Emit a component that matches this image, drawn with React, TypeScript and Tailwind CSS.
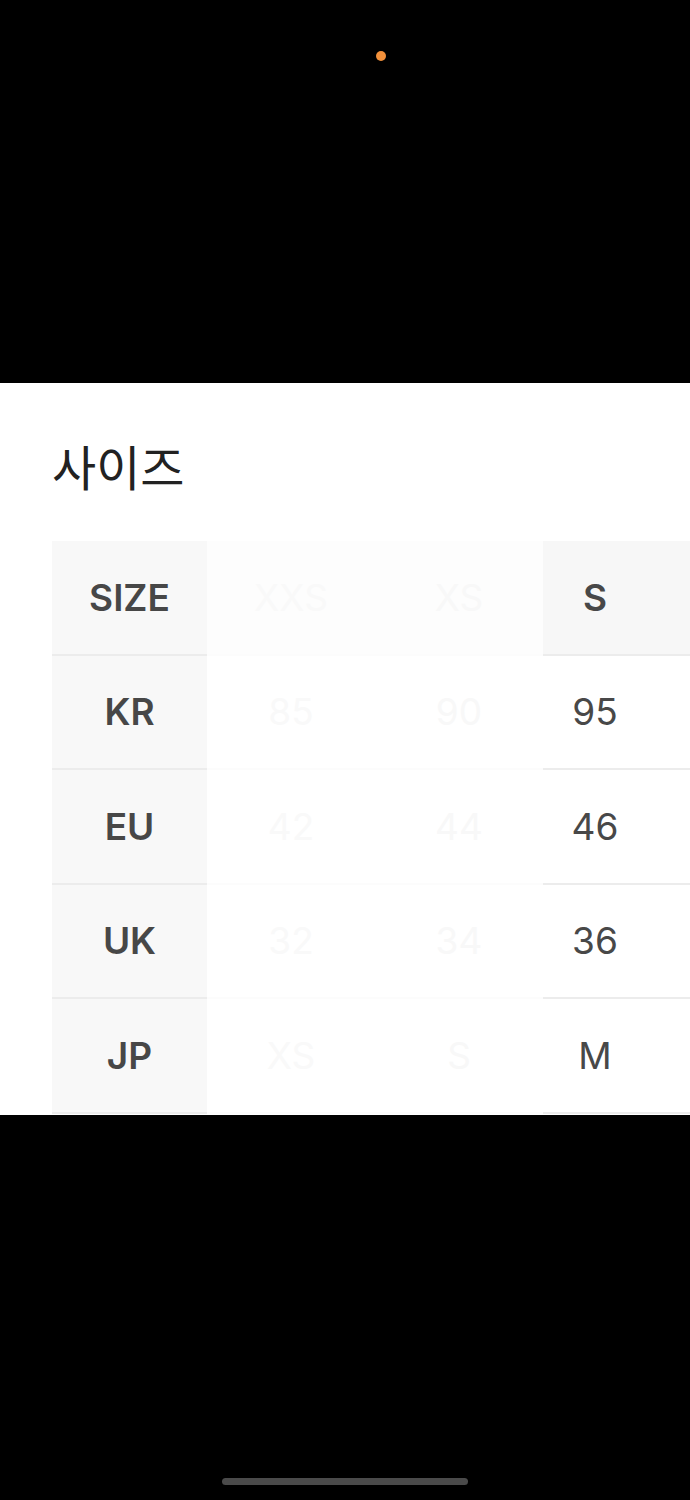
const FONT = "font-['Inter','Liberation_Sans',sans-serif]"

type Row = {
  label: string
  ghostA: string
  ghostB: string
  value: string
  header?: boolean
}

const rows: Row[] = [
  { label: 'SIZE', ghostA: 'XXS', ghostB: 'XS', value: 'S', header: true },
  { label: 'KR', ghostA: '85', ghostB: '90', value: '95' },
  { label: 'EU', ghostA: '42', ghostB: '44', value: '46' },
  { label: 'UK', ghostA: '32', ghostB: '34', value: '36' },
  { label: 'JP', ghostA: 'XS', ghostB: 'S', value: 'M' },
]

function SizeRow({ row }: { row: Row }) {
  return (
    <div className="flex h-[114.5px] shrink-0">
      {/* 항목 라벨 열 */}
      <div className="flex w-[155px] shrink-0 items-center justify-center border-b-2 border-[#ececec] bg-[#f8f8f8] text-[37px] font-semibold text-[#474747]">
        {row.label}
      </div>
      {/* 흐릿하게 날아간 가운데 열 */}
      <div
        className={[
          'flex w-[168px] shrink-0 items-center justify-center border-b-2 border-[#fcfcfc] text-[37px] text-[#f9f9f9]',
          row.header ? 'bg-[#fdfdfd]' : 'bg-white',
        ].join(' ')}
      >
        {row.ghostA}
      </div>
      <div
        className={[
          'flex w-[168px] shrink-0 items-center justify-center border-b-2 border-[#fcfcfc] text-[37px] text-[#f8f8f8]',
          row.header ? 'bg-[#fdfdfd]' : 'bg-white',
        ].join(' ')}
      >
        {row.ghostB}
      </div>
      <div
        className={[
          'flex w-[104px] shrink-0 items-center justify-center border-b-2 border-[#ececec] text-[37px] text-[#484848]',
          row.header ? 'bg-[#f7f7f7] font-semibold' : 'bg-white font-normal',
        ].join(' ')}
      >
        {row.value}
      </div>
      <div
        className={[
          'w-[60px] shrink-0 border-b-2 border-[#ececec]',
          row.header ? 'bg-[#f7f7f7]' : 'bg-white',
        ].join(' ')}
      />
    </div>
  )
}

export default function App() {
  return (
    <div className={`flex h-[1500px] w-[690px] flex-col bg-black ${FONT}`}>
      <div className="h-[383px] shrink-0 pl-[376px] pt-[51px]">
        <div className="h-[10px] w-[10px] rounded-full bg-[#f3913b]" />
      </div>

      <div className="flex h-[732px] shrink-0 flex-col overflow-hidden bg-white pl-[52px] pt-[58px]">
        <h2 className="font-['Noto_Sans_CJK_KR',sans-serif] text-[48px] leading-none font-normal text-[#222]">
          사이즈
        </h2>
        <div className="mt-[52px] flex flex-col">
          {rows.map((r) => (
            <SizeRow key={r.label} row={r} />
          ))}
        </div>
      </div>

      <div className="flex flex-1 items-end justify-center pb-[15px]">
        <div className="h-[7px] w-[246px] rounded-full bg-[#4a4a4a]" />
      </div>
    </div>
  )
}
